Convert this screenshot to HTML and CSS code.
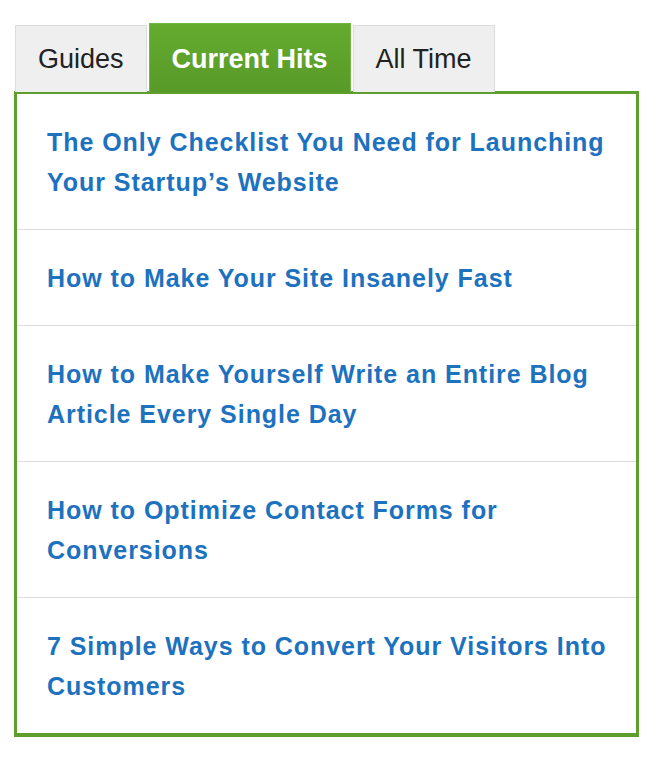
FILE: index.html
```html
<!DOCTYPE html>
<html lang="en">
<head>
    <meta charset="UTF-8">
    <meta name="viewport" content="width=device-width, initial-scale=1.0">
    <title>Popular Posts</title>
    <link rel="stylesheet" href="styles.css">
</head>
<body>
    <div id="widget">

        <div class="tabs">
            <a class="tab" href="#">Guides</a>
            <a class="tab active" href="#">Current Hits</a>
            <a class="tab" href="#">All Time</a>
        </div>

        <ul class="posts">
            <li><a href="#">The Only Checklist You Need for Launching Your Startup’s Website</a></li>
            <li><a href="#">How to Make Your Site Insanely Fast</a></li>
            <li><a href="#">How to Make Yourself Write an Entire Blog Article Every Single Day</a></li>
            <li><a href="#">How to Optimize Contact Forms for Conversions</a></li>
            <li><a href="#">7 Simple Ways to Convert Your Visitors Into Customers</a></li>
        </ul>

    </div>
</body>
</html>
```

FILE: styles.css
```css
body {
    margin: 0;
    padding: 0;
    background-color: #ffffff;
    font-family: "Liberation Sans", Arial, sans-serif;
}

#widget {
    width: 625px;
    padding: 23px 0 0 14px;
}

.tabs {
    display: flex;
    align-items: flex-end;
    gap: 2px;
    padding-left: 1px;
}

.tab {
    display: block;
    height: 66px;
    line-height: 66px;
    padding: 0 22px;
    background-color: #efefef;
    border: 1px solid #dcdcdc;
    border-bottom: none;
    color: #222222;
    font-size: 27px;
    text-decoration: none;
}

.tab.active {
    height: 68px;
    line-height: 70px;
    background: linear-gradient(#64ab2f, #589a28);
    border: 1px solid #72b83e;
    border-bottom: none;
    color: #ffffff;
    font-weight: bold;
}

.posts {
    list-style: none;
    margin: -1px 0 0 0;
    padding: 0;
    border: 3px solid #5d9e2d;
    border-bottom-width: 4px;
}

.posts li {
    padding: 28px 18px 27px 30px;
    border-bottom: 1px solid #dedede;
    font-size: 25px;
    line-height: 40px;
    letter-spacing: 0.95px;
}

.posts li:last-child {
    border-bottom: none;
}

.posts a {
    color: #1d72bf;
    font-weight: bold;
    text-decoration: none;
}
```
